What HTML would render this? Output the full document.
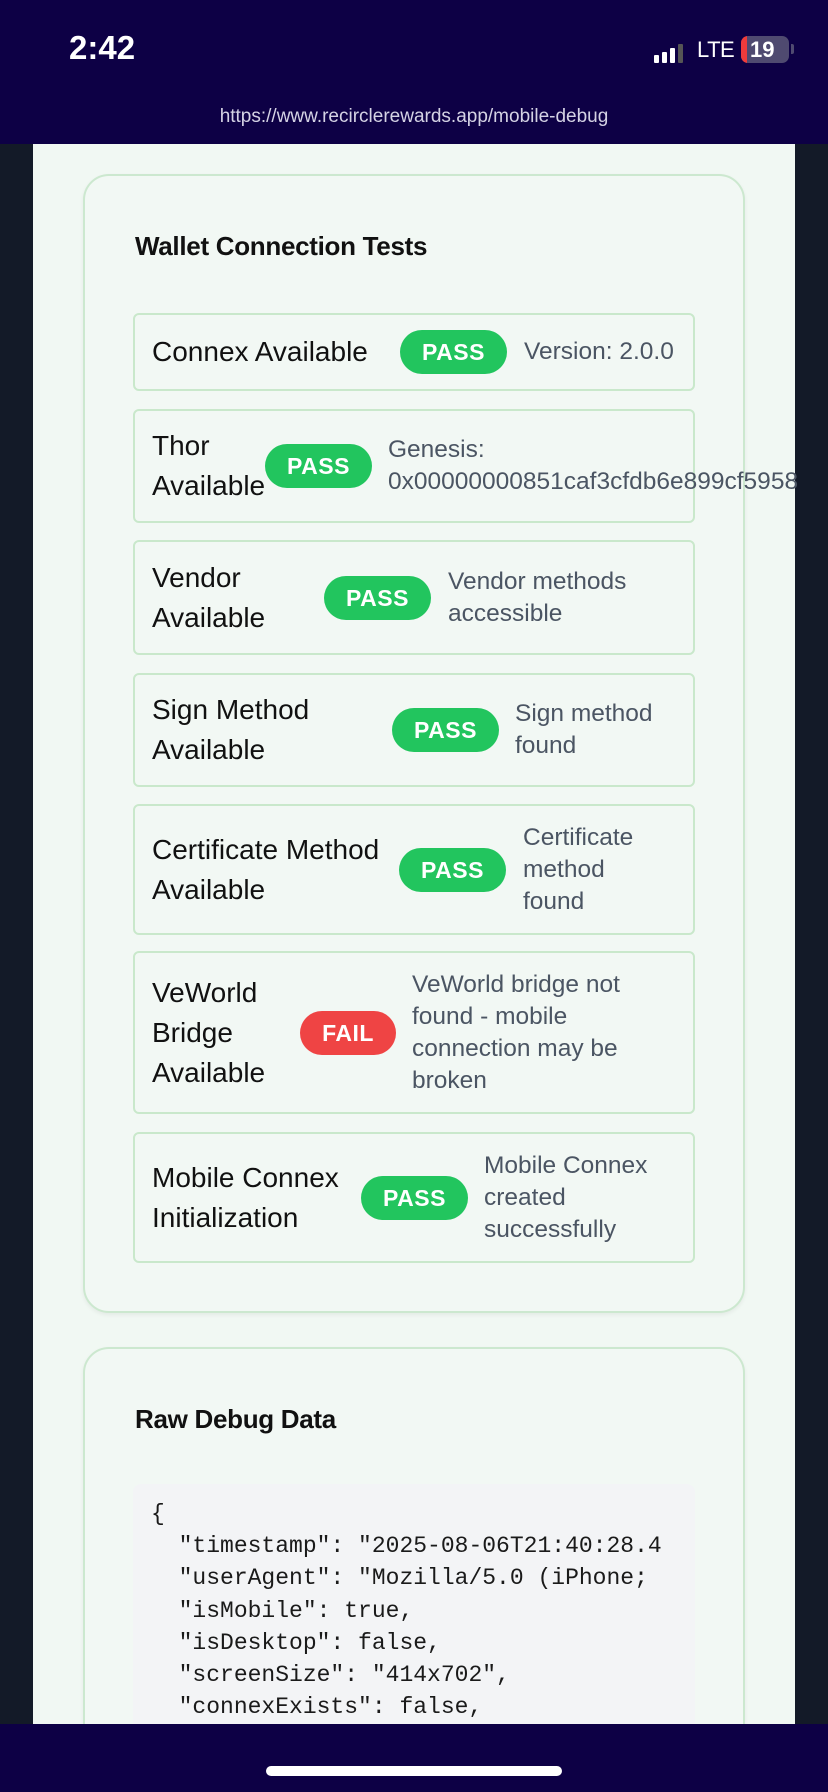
<!DOCTYPE html>
<html><head><meta charset="utf-8"><style>
*{box-sizing:border-box;margin:0;padding:0}
html,body{width:828px;height:1792px;overflow:hidden;background:#131a28;font-family:"Liberation Sans",sans-serif}
.wrap{position:relative;width:828px;height:1792px;overflow:hidden}
.top{position:absolute;left:0;top:0;width:828px;height:144px;background:#0d0045}
.time{position:absolute;left:69px;top:29px;color:#fff;font-size:33px;font-weight:bold}
.url{position:absolute;left:0;width:828px;top:106px;text-align:center;color:#d4d2e4;font-size:19px}
.panel{position:absolute;left:33px;top:144px;width:762px;height:1580px;background:#f1f8f3}
.card{position:absolute;left:83px;width:662px;border:2px solid #cce8cf;border-radius:26px;background:#f2f8f4;box-shadow:0 2px 4px rgba(0,0,0,.06)}
.h{position:absolute;left:50px;font-size:26px;font-weight:bold;color:#111;letter-spacing:-0.3px}
.row{position:absolute;left:133px;width:562px;border:2px solid #c9e8cb;border-radius:6px;display:flex;align-items:center;font-size:28px;line-height:40px;color:#111}
.row .l{position:absolute;left:17px}
.b{position:absolute;height:44px;width:107px;border-radius:22px;background:#22c55e;color:#fff;font-weight:bold;font-size:23px;display:flex;align-items:center;justify-content:center;letter-spacing:0.5px}
.b.f{background:#ef4444;width:96px}
.d{position:absolute;font-size:24.5px;line-height:32px;color:#4b5563;white-space:nowrap}
.pre{position:absolute;left:133px;top:1484px;width:562px;height:260px;background:#f3f4f6;border-radius:8px;overflow:hidden;font-family:"Liberation Mono",monospace;font-size:23px;line-height:32.2px;color:#1a1a1a;white-space:pre;padding:14px 0 0 18px}
.bot{position:absolute;left:0;top:1724px;width:828px;height:68px;background:#0d0045}
.home{position:absolute;left:266px;top:1766px;width:296px;height:10px;border-radius:5px;background:#fff}
</style></head><body><div class="wrap">
<div class="top">
<div class="time">2:42</div>
<div style="position:absolute;left:654px;top:44px;display:flex;align-items:flex-end;gap:3px">
<div style="width:5px;height:8px;background:#fff;border-radius:1px"></div>
<div style="width:5px;height:11px;background:#fff;border-radius:1px"></div>
<div style="width:5px;height:15px;background:#fff;border-radius:1px"></div>
<div style="width:5px;height:19px;background:#555;border-radius:1px"></div>
</div>
<div style="position:absolute;left:697px;top:37px;color:#fff;font-size:22px;letter-spacing:-0.5px">LTE</div>
<div style="position:absolute;left:741px;top:36px;width:48px;height:27px;border-radius:7px;background:#4f4a70;overflow:hidden"><div style="width:6px;height:27px;background:#ef3b3b"></div><span style="position:absolute;left:9px;top:0;color:#fff;font-size:22px;font-weight:bold;line-height:27px">19</span></div>
<div style="position:absolute;left:791px;top:44px;width:3px;height:10px;background:#4f4a70;border-radius:0 2px 2px 0"></div>
<div class="url">https://www.recirclerewards.app/mobile-debug</div>
</div>
<div class="panel"></div>
<div class="card" style="top:174px;height:1139px"><div class="h" style="top:55px">Wallet Connection Tests</div></div>

<div class="row" style="top:313px;height:78px"><div class="l">Connex Available</div><div class="b" style="left:265px">PASS</div><div class="d" style="left:389px">Version: 2.0.0</div></div>
<div class="row" style="top:409px;height:114px"><div class="l">Thor<br>Available</div><div class="b" style="left:130px">PASS</div><div class="d" style="left:253px">Genesis:<br>0x00000000851caf3cfdb6e899cf5958</div></div>
<div class="row" style="top:540px;height:115px"><div class="l">Vendor<br>Available</div><div class="b" style="left:189px">PASS</div><div class="d" style="left:313px">Vendor methods<br>accessible</div></div>
<div class="row" style="top:673px;height:114px"><div class="l">Sign Method<br>Available</div><div class="b" style="left:257px">PASS</div><div class="d" style="left:380px">Sign method<br>found</div></div>
<div class="row" style="top:804px;height:131px"><div class="l">Certificate Method<br>Available</div><div class="b" style="left:264px">PASS</div><div class="d" style="left:388px">Certificate<br>method<br>found</div></div>
<div class="row" style="top:951px;height:163px"><div class="l">VeWorld<br>Bridge<br>Available</div><div class="b f" style="left:165px">FAIL</div><div class="d" style="left:277px">VeWorld bridge not<br>found - mobile<br>connection may be<br>broken</div></div>
<div class="row" style="top:1132px;height:131px"><div class="l">Mobile Connex<br>Initialization</div><div class="b" style="left:226px">PASS</div><div class="d" style="left:349px">Mobile Connex<br>created<br>successfully</div></div>

<div class="card" style="top:1347px;height:440px"><div class="h" style="top:55px">Raw Debug Data</div></div>
<div class="pre">{
  "timestamp": "2025-08-06T21:40:28.4
  "userAgent": "Mozilla/5.0 (iPhone;
  "isMobile": true,
  "isDesktop": false,
  "screenSize": "414x702",
  "connexExists": false,
</div>
<div class="bot"></div>
<div class="home"></div>
</div></body></html>
